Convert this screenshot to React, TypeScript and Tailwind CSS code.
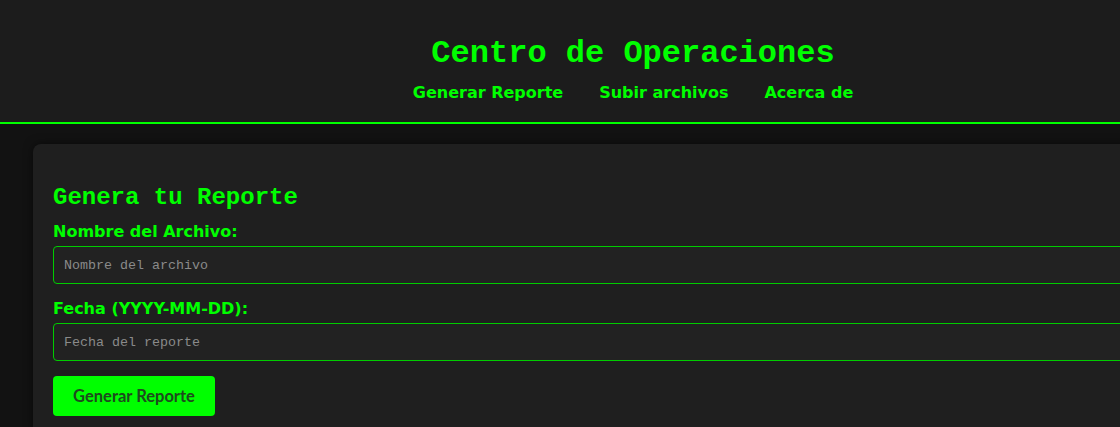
export default function App() {
  return (
    <div className="min-h-screen w-[1266px] bg-[#121212]">
      {/* Header */}
      <header className="bg-[#1c1c1c] border-b-2 border-[#00ff00] pt-[34px] pb-[19px] flex flex-col items-center">
        <h1 className="font-['Liberation_Mono',monospace] font-bold text-[32px] leading-[40px] text-[#00ff00]">
          Centro de Operaciones
        </h1>
        <nav className="mt-[9px] flex gap-[36px] font-['DejaVu_Sans',sans-serif] font-bold text-[16px] leading-[20px] text-[#00ff00]">
          <a href="#">Generar Reporte</a>
          <a href="#">Subir archivos</a>
          <a href="#">Acerca de</a>
        </nav>
      </header>

      {/* Main */}
      <main className="px-[33px] pt-[20px]">
        <section className="w-[1200px] bg-[#1f1f1f] rounded-lg px-5 pt-[40px] pb-5 shadow-[0_0_10px_rgba(0,0,0,0.5)]">
          <h2 className="font-['Liberation_Mono',monospace] font-bold text-[24px] leading-[28px] text-[#00ff00]">
            Genera tu Reporte
          </h2>
          <form className="mt-[10px] flex flex-col" onSubmit={(e) => e.preventDefault()}>
            <label className="font-['DejaVu_Sans',sans-serif] font-bold text-[16px] leading-[20px] text-[#00ff00]">
              Nombre del Archivo:
            </label>
            <input
              type="text"
              placeholder="Nombre del archivo"
              className="mt-[4px] h-[38px] w-full rounded border border-[#00cc00] bg-[#222222] px-[10px] font-['Liberation_Mono',monospace] text-[13.33px] text-[#cccccc] placeholder:text-[#8a8a8a] outline-none"
            />
            <label className="mt-[15px] font-['DejaVu_Sans',sans-serif] font-bold text-[16px] leading-[20px] text-[#00ff00]">
              Fecha (YYYY-MM-DD):
            </label>
            <input
              type="text"
              placeholder="Fecha del reporte"
              className="mt-[4px] h-[38px] w-full rounded border border-[#00cc00] bg-[#222222] px-[10px] font-['Liberation_Mono',monospace] text-[13.33px] text-[#cccccc] placeholder:text-[#8a8a8a] outline-none"
            />
            <div className="mt-[15px]">
              <button
                type="submit"
                className="h-[40px] w-[162px] rounded bg-[#00ff00] font-['Lato',sans-serif] font-bold text-[16.5px] text-[#1e4a1e]"
              >
                Generar Reporte
              </button>
            </div>
          </form>
        </section>
      </main>
    </div>
  );
}
